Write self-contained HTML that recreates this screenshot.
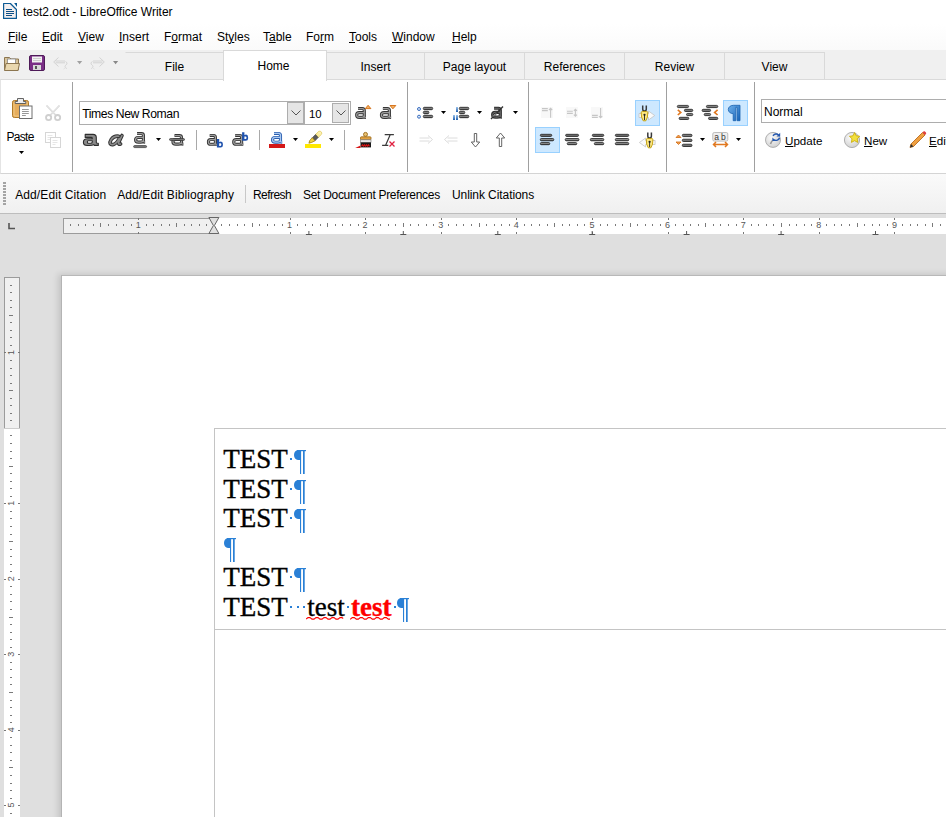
<!DOCTYPE html>
<html><head><meta charset="utf-8">
<style>
*{margin:0;padding:0;box-sizing:border-box}
html,body{width:946px;height:817px;overflow:hidden}
body{position:relative;background:#dfdfdf;font-family:"Liberation Sans",sans-serif;font-size:12px;color:#000}
.a{position:absolute}
.t{position:absolute;font-size:12px;line-height:14px;white-space:nowrap}
u{text-decoration:underline;text-underline-offset:0.6px;text-decoration-thickness:1px}
#title{left:0;top:0;width:946px;height:24px;background:#fff}
#menu{left:0;top:24px;width:946px;height:26px;background:linear-gradient(#fff,#fafafa)}
#tabs{left:0;top:50px;width:946px;height:30px;background:#f0f0f0;border-bottom:1px solid #d9d9d9}
.tab{position:absolute;top:2px;height:28px;border:1px solid #d9d9d9;border-bottom:none;background:#f0f0f0;text-align:center;line-height:28.5px;font-size:12px}
#ribbon{left:0;top:79px;width:946px;height:95px;background:#fff;border-top:1px solid #dadada;border-bottom:1px solid #d4d4d4;border-left:1px solid #e4e4e4}
.sep{position:absolute;width:1px;background:#a0a0a0}
#cite{left:0;top:174px;width:946px;height:40px;background:linear-gradient(#fafafa,#f0f0f0);border-bottom:1px solid #bdbdbd}
.box{position:absolute;background:#fff;border:1px solid #adadad}
.ddb{position:absolute;background:#e5e5e5;border:1px solid #adadad}
.hl{position:absolute;background:#cde8ff;border:1px solid #99d1ff}
.doc{position:absolute;font-family:"Liberation Serif",serif;font-size:27px;line-height:29.35px;white-space:pre;-webkit-text-stroke:0.35px currentColor}
.pm{color:#2f86d6}
</style></head><body>
<div id="title" class="a">
  <svg class="a" style="left:0;top:0" width="22" height="22" viewBox="0 0 22 22">
    <path d="M3.6 3.5H10.4L16.4 9.5V18.4H3.6Z" fill="#f3efef" stroke="#0c5a94" stroke-width="1.2" stroke-linejoin="round"/>
    <path d="M14.1 2.9H17V6.9Z" fill="#0c5a94"/>
    <path d="M6 9.5h6M6 11.5h8M6 13.5h8M6 15.5h6" stroke="#0c4f86" stroke-width="1"/>
  </svg>
  <div class="t" style="left:23px;top:4.5px">test2.odt - LibreOffice Writer</div>
</div>
<div id="menu" class="a"><div class="t" style="left:8px;top:6px"><u>F</u>ile</div><div class="t" style="left:42px;top:6px"><u>E</u>dit</div><div class="t" style="left:78px;top:6px"><u>V</u>iew</div><div class="t" style="left:119px;top:6px"><u>I</u>nsert</div><div class="t" style="left:164px;top:6px">F<u>o</u>rmat</div><div class="t" style="left:217px;top:6px">St<u>y</u>les</div><div class="t" style="left:263px;top:6px">T<u>a</u>ble</div><div class="t" style="left:306px;top:6px">Fo<u>r</u>m</div><div class="t" style="left:349px;top:6px"><u>T</u>ools</div><div class="t" style="left:392px;top:6px"><u>W</u>indow</div><div class="t" style="left:452px;top:6px"><u>H</u>elp</div></div>
<div id="tabs" class="a"><div class="tab" style="left:125px;width:99px;border-left-color:#f0f0f0">File</div><div class="tab" style="left:223px;width:104px;top:0;height:31px;background:#fff;line-height:31.5px;z-index:2;padding-right:3px">Home</div><div class="tab" style="left:326px;width:99px">Insert</div><div class="tab" style="left:424px;width:101px">Page layout</div><div class="tab" style="left:524px;width:101px">References</div><div class="tab" style="left:624px;width:101px">Review</div><div class="tab" style="left:724px;width:101px">View</div></div>
<div id="ribbon" class="a"></div>
<div class="sep" style="left:72px;top:82px;height:90px"></div>
<div class="sep" style="left:407px;top:82px;height:90px"></div>
<div class="sep" style="left:528px;top:82px;height:90px"></div>
<div class="sep" style="left:666px;top:82px;height:90px"></div>
<div class="sep" style="left:754px;top:82px;height:90px"></div>
<div class="box" style="left:79px;top:101px;width:226px;height:24px"></div>
<div class="ddb" style="left:287px;top:102px;width:17px;height:22px"></div>
<div class="a" style="left:303px;top:102px;width:3px;height:22px;background:#adadad"></div>
<div class="box" style="left:305px;top:101px;width:46px;height:24px;border-left:none"></div>
<div class="ddb" style="left:332px;top:103px;width:17px;height:20px"></div>
<div class="t" style="left:82.2px;top:106.8px;font-size:12.2px;letter-spacing:-0.42px">Times New Roman</div>
<div class="t" style="left:309px;top:106.5px;font-size:11.4px">10</div>
<svg class="a" style="left:290.5px;top:110px" width="10" height="6" viewBox="0 0 10 6"><path d="M0.5 0.5L5 5L9.5 0.5" fill="none" stroke="#555" stroke-width="1"/></svg>
<svg class="a" style="left:335.5px;top:110px" width="10" height="6" viewBox="0 0 10 6"><path d="M0.5 0.5L5 5L9.5 0.5" fill="none" stroke="#555" stroke-width="1"/></svg>
<div class="box" style="left:761px;top:99px;width:200px;height:24px"></div>
<div class="t" style="left:764px;top:104.5px">Normal</div>
<div class="t" style="left:785px;top:133.5px;font-size:11.6px"><u>U</u>pdate</div>
<div class="t" style="left:864px;top:133.5px;font-size:11.6px"><u>N</u>ew</div>
<div class="t" style="left:929px;top:133.5px;font-size:11.6px"><u>E</u>dit</div>
<div class="t" style="left:6.5px;top:129.8px;letter-spacing:-0.7px">Paste</div>
<div class="hl" style="left:635px;top:100px;width:25px;height:26px"></div>
<div class="hl" style="left:723px;top:100px;width:25px;height:26px"></div>
<div class="hl" style="left:535px;top:127px;width:25px;height:26px"></div>
<svg class="a" style="left:0;top:0" width="946" height="240" viewBox="0 0 946 240">
<defs><linearGradient id="gbar" x1="0" y1="0" x2="0" y2="1"><stop offset="0" stop-color="#505050"/><stop offset="0.4" stop-color="#959595"/><stop offset="1" stop-color="#141414"/></linearGradient><linearGradient id="gblue" x1="0" y1="0" x2="0" y2="1"><stop offset="0" stop-color="#9cc3ec"/><stop offset="1" stop-color="#1f5fae"/></linearGradient><linearGradient id="gpil" x1="0" y1="0" x2="1" y2="1"><stop offset="0" stop-color="#6fb0ea"/><stop offset="1" stop-color="#1663b8"/></linearGradient><radialGradient id="gcirc" cx="0.4" cy="0.35" r="0.7"><stop offset="0" stop-color="#fafafa"/><stop offset="1" stop-color="#cfcfcf"/></radialGradient></defs>
<path d="M4.5 57.5h5l1.5 1.5h7.5v11h-14z" fill="#d9c49a" stroke="#8c7650"/>
<rect x="7.5" y="59" width="8" height="5" fill="#fff" stroke="#888" stroke-width="0.8"/>
<path d="M4.5 70.5l1.5-7h13.5l-1.5 7z" fill="#e9d7ae" stroke="#8c7650"/>
<rect x="29.5" y="55.5" width="15" height="15" rx="1.5" fill="#7a2e86" stroke="#4e1a58"/>
<rect x="32" y="56.5" width="10" height="6" fill="#f2f2f2"/><path d="M33 58.5h8M33 60.5h8" stroke="#bbb" stroke-width="0.7"/>
<rect x="33" y="65" width="8" height="5" fill="#d8d8d8"/><rect x="35" y="66" width="2" height="3" fill="#555"/>
<path d="M58.5 57.5l-4.8 4.5 4.8 4.5M55.5 61h9.5M55.5 62.8h9.5M65.5 61.5c2 0.8 1.8 2.5 0.5 3.5s-1.5 2.6 0.8 3.5M64.5 68.5l-0.8 0.5" fill="none" stroke="#cfcfcf" stroke-width="0.9"/>
<path d="M77 61h5.2l-2.6 3.2z" fill="#a0a0a0"/>
<path d="M99.5 57.5l4.8 4.5-4.8 4.5M102.5 61h-9.5M102.5 62.8h-9.5M92.5 61.5c-2 0.8-1.8 2.5-0.5 3.5s1.5 2.6-0.8 3.5M93.5 68.5l0.8 0.5" fill="none" stroke="#cfcfcf" stroke-width="0.9"/>
<path d="M113 61h5.2l-2.6 3.2z" fill="#888"/>
<rect x="12.5" y="100.5" width="16" height="17" rx="1.8" fill="#e6ad5c" stroke="#b07a28"/>
<rect x="14" y="102" width="13" height="14" rx="1" fill="none" stroke="#f3cf8e" stroke-width="0.8"/>
<path d="M17.5 101.5v-3h6v3h2.3v2h-10.6v-2z" fill="#ececec" stroke="#555" stroke-width="0.9"/>
<rect x="19.5" y="106" width="12.5" height="12.5" fill="#fff" stroke="#6e6e6e"/>
<path d="M22 109.5h6.8M22 111.5h6.8M22 113.5h6.8M22 115.5h3.8" stroke="#8c8c8c" stroke-width="0.9"/>
<path d="M19 151h5l-2.5 3z" fill="#000"/>
<path d="M46.5 105.5L56 115.5M59.5 105.5L50 115.5" stroke="#d4d4d4" stroke-width="1.7"/><path d="M46.8 106L55.5 115M59.2 106L50.5 115" stroke="#f4f4f4" stroke-width="0.6"/>
<circle cx="48.6" cy="117.6" r="2.6" fill="none" stroke="#cfcfcf" stroke-width="1.8"/><circle cx="57.6" cy="117.6" r="2.6" fill="none" stroke="#cfcfcf" stroke-width="1.8"/>
<rect x="45.5" y="132.5" width="10" height="10" fill="#fff" stroke="#d6d6d6"/>
<path d="M47.5 135.5h5M47.5 137.5h5M47.5 139.5h3" stroke="#e0e0e0" stroke-width="0.8"/>
<rect x="50.5" y="137.5" width="10" height="10" fill="#fff" stroke="#d6d6d6"/>
<path d="M52.5 140.5h5M52.5 142.5h5M52.5 144.5h3" stroke="#e0e0e0" stroke-width="0.8"/>
<path d="M85.2 134.4H93Q96.3 134.4 96.3 137.6V142.5Q96.3 143.3 98.3 143.3V145.4H94.3L93.7 144.6Q92.5 145.5 89.5 145.5H87.3Q83.4 145.5 83.4 142.2Q83.4 138.7 87.5 138.7H92.3V138.3Q92.3 137.4 91.2 137.4H85.2Z M88 140.7H92.3V142Q92.3 143.3 90.3 143.3H88.4Q87.4 143.3 87.4 142Q87.4 140.7 88 140.7Z" fill="#8a8a8a" fill-rule="evenodd" stroke="#2e2e2e" stroke-width="1.1" stroke-linejoin="round"/>
<path d="M118.8 136.2 Q114 135.5 111.2 139.5 Q109.6 142 110.2 143.6 Q111 145 113.5 144.4 Q116.5 143.6 119.3 138.5 M122 135.5 L118.6 142.6 Q118 144.6 120.6 144" fill="none" stroke="#333" stroke-width="3.6" stroke-linejoin="round" stroke-linecap="round"/>
<path d="M118.8 136.2 Q114 135.5 111.2 139.5 Q109.6 142 110.2 143.6 Q111 145 113.5 144.4 Q116.5 143.6 119.3 138.5 M122 135.5 L118.6 142.6 Q118 144.6 120.6 144" fill="none" stroke="#8c8c8c" stroke-width="1.6" stroke-linejoin="round" stroke-linecap="round"/>
<path d="M 137.05 133.54 H 141.47 Q 143.44 133.54 143.44 135.45 V 141.30 Q 143.44 142.16 145.11 142.16 M 143.44 137.47 H 138.23 Q 135.57 137.47 135.57 139.81 Q 135.57 142.16 138.23 142.16 H 140.49 Q 143.44 142.16 143.44 140.05" fill="none" stroke="#363636" stroke-width="3.1" stroke-linejoin="round"/><path d="M 137.05 133.54 H 141.47 Q 143.44 133.54 143.44 135.45 V 141.30 Q 143.44 142.16 145.11 142.16 M 143.44 137.47 H 138.23 Q 135.57 137.47 135.57 139.81 Q 135.57 142.16 138.23 142.16 H 140.49 Q 143.44 142.16 143.44 140.05" fill="none" stroke="#9c9c9c" stroke-width="1.25" stroke-linejoin="round"/>
<rect x="133.6" y="145.6" width="13" height="2" rx="1" fill="#777" stroke="#333" stroke-width="0.7"/>
<path d="M156 138h5l-2.5 3z" fill="#000"/>
<path d="M 174.53 135.54 H 179.36 Q 181.51 135.54 181.51 137.45 V 143.30 Q 181.51 144.16 183.34 144.16 M 181.51 139.47 H 175.81 Q 172.91 139.47 172.91 141.81 Q 172.91 144.16 175.81 144.16 H 178.29 Q 181.51 144.16 181.51 142.05" fill="none" stroke="#363636" stroke-width="3.1" stroke-linejoin="round"/><path d="M 174.53 135.54 H 179.36 Q 181.51 135.54 181.51 137.45 V 143.30 Q 181.51 144.16 183.34 144.16 M 181.51 139.47 H 175.81 Q 172.91 139.47 172.91 141.81 Q 172.91 144.16 175.81 144.16 H 178.29 Q 181.51 144.16 181.51 142.05" fill="none" stroke="#9c9c9c" stroke-width="1.25" stroke-linejoin="round"/>
<rect x="169.5" y="138.5" width="15" height="2" rx="1" fill="#777" stroke="#333" stroke-width="0.7"/>
<rect x="196" y="130" width="1" height="20" fill="#a9a9a9"/>
<path d="M 209.72 135.47 H 213.66 Q 215.41 135.47 215.41 137.44 V 143.44 Q 215.41 144.32 216.90 144.32 M 215.41 139.51 H 210.78 Q 208.41 139.51 208.41 141.92 Q 208.41 144.32 210.78 144.32 H 212.79 Q 215.41 144.32 215.41 142.16" fill="none" stroke="#363636" stroke-width="3.1" stroke-linejoin="round"/><path d="M 209.72 135.47 H 213.66 Q 215.41 135.47 215.41 137.44 V 143.44 Q 215.41 144.32 216.90 144.32 M 215.41 139.51 H 210.78 Q 208.41 139.51 208.41 141.92 Q 208.41 144.32 210.78 144.32 H 212.79 Q 215.41 144.32 215.41 142.16" fill="none" stroke="#9c9c9c" stroke-width="1.25" stroke-linejoin="round"/>
<path d="M216.9 139.0h2.3v2.9q0.8-0.5 1.7-0.5q2 0 2 2.6v1.2q0 2.4-2.3 2.4h-3.7z M219.20000000000002 143.3v2.6h1.2q0.9 0 0.9-1.1v-0.5q0-1-0.9-1z" fill="#1f52ad" fill-rule="evenodd"/>
<path d="M 235.17 135.47 H 239.64 Q 241.62 135.47 241.62 137.44 V 143.44 Q 241.62 144.32 243.31 144.32 M 241.62 139.51 H 236.36 Q 233.69 139.51 233.69 141.92 Q 233.69 144.32 236.36 144.32 H 238.65 Q 241.62 144.32 241.62 142.16" fill="none" stroke="#363636" stroke-width="3.1" stroke-linejoin="round"/><path d="M 235.17 135.47 H 239.64 Q 241.62 135.47 241.62 137.44 V 143.44 Q 241.62 144.32 243.31 144.32 M 241.62 139.51 H 236.36 Q 233.69 139.51 233.69 141.92 Q 233.69 144.32 236.36 144.32 H 238.65 Q 241.62 144.32 241.62 142.16" fill="none" stroke="#9c9c9c" stroke-width="1.25" stroke-linejoin="round"/>
<path d="M242.1 132.2h2.3v2.9q0.8-0.5 1.7-0.5q2 0 2 2.6v1.2q0 2.4-2.3 2.4h-3.7z M244.4 136.5v2.6h1.2q0.9 0 0.9-1.1v-0.5q0-1-0.9-1z" fill="#1f52ad" fill-rule="evenodd"/>
<rect x="259" y="130" width="1" height="20" fill="#a9a9a9"/>
<path d="M 274.00 133.46 H 278.50 Q 280.50 133.46 280.50 135.41 V 141.36 Q 280.50 142.24 282.20 142.24 M 280.50 137.46 H 275.20 Q 272.50 137.46 272.50 139.85 Q 272.50 142.24 275.20 142.24 H 277.50 Q 280.50 142.24 280.50 140.09" fill="none" stroke="#2d5fb0" stroke-width="3.1" stroke-linejoin="round"/><path d="M 274.00 133.46 H 278.50 Q 280.50 133.46 280.50 135.41 V 141.36 Q 280.50 142.24 282.20 142.24 M 280.50 137.46 H 275.20 Q 272.50 137.46 272.50 139.85 Q 272.50 142.24 275.20 142.24 H 277.50 Q 280.50 142.24 280.50 140.09" fill="none" stroke="#a8c8f0" stroke-width="1.25" stroke-linejoin="round"/>
<rect x="269" y="144" width="16" height="4" fill="#d41818"/>
<path d="M293 138h5l-2.5 3z" fill="#000"/>
<defs><linearGradient id="ghl" x1="0" y1="1" x2="1" y2="0"><stop offset="0" stop-color="#f6e27a"/><stop offset="1" stop-color="#fff6c8"/></linearGradient></defs>
<path d="M315.5 134.5l3.2-3.2q1.5-0.6 2.6 0.6 0.9 1.2 0.2 2.4l-3.3 3.3z" fill="url(#ghl)" stroke="#d8c040" stroke-width="0.6"/>
<path d="M312.3 137.7l3.2-3.2 2.7 3.1-3.2 3.2z" fill="#5a5a5a" stroke="#333" stroke-width="0.5"/>
<path d="M312.3 137.7l2.7 3.1-3.3 1.6-2.8 0.8 0.9-2.8z" fill="#f0d040" stroke="#9a7a10" stroke-width="0.8"/>
<rect x="305" y="144" width="16" height="4" fill="#ffe800"/>
<path d="M329 138h5l-2.5 3z" fill="#000"/>
<rect x="344" y="130" width="1" height="20" fill="#a9a9a9"/>
<path d="M 358.07 108.57 H 362.39 Q 364.30 108.57 364.30 110.54 V 116.54 Q 364.30 117.42 365.93 117.42 M 364.30 112.61 H 359.22 Q 356.64 112.61 356.64 115.02 Q 356.64 117.42 359.22 117.42 H 361.43 Q 364.30 117.42 364.30 115.26" fill="none" stroke="#363636" stroke-width="3.1" stroke-linejoin="round"/><path d="M 358.07 108.57 H 362.39 Q 364.30 108.57 364.30 110.54 V 116.54 Q 364.30 117.42 365.93 117.42 M 364.30 112.61 H 359.22 Q 356.64 112.61 356.64 115.02 Q 356.64 117.42 359.22 117.42 H 361.43 Q 364.30 117.42 364.30 115.26" fill="none" stroke="#9c9c9c" stroke-width="1.25" stroke-linejoin="round"/>
<path d="M365.3 108.6l2.8-3.3 2.8 3.3z" fill="#f4b060" stroke="#d06a10" stroke-width="0.9"/>
<path d="M 382.90 108.57 H 387.40 Q 389.40 108.57 389.40 110.54 V 116.54 Q 389.40 117.42 391.10 117.42 M 389.40 112.61 H 384.10 Q 381.40 112.61 381.40 115.02 Q 381.40 117.42 384.10 117.42 H 386.40 Q 389.40 117.42 389.40 115.26" fill="none" stroke="#363636" stroke-width="3.1" stroke-linejoin="round"/><path d="M 382.90 108.57 H 387.40 Q 389.40 108.57 389.40 110.54 V 116.54 Q 389.40 117.42 391.10 117.42 M 389.40 112.61 H 384.10 Q 381.40 112.61 381.40 115.02 Q 381.40 117.42 384.10 117.42 H 386.40 Q 389.40 117.42 389.40 115.26" fill="none" stroke="#9c9c9c" stroke-width="1.25" stroke-linejoin="round"/>
<path d="M390 105.5h5.8l-2.9 3.3z" fill="#f4b060" stroke="#d06a10" stroke-width="0.9"/>
<circle cx="365.5" cy="134.4" r="2" fill="#e8c070" stroke="#9a6a18" stroke-width="0.9"/>
<rect x="360.5" y="136.8" width="10.5" height="3" rx="0.8" fill="#e0a040" stroke="#9a6a18" stroke-width="0.8"/>
<rect x="360.5" y="139.8" width="10.5" height="2.6" fill="#e8e8e8" stroke="#777" stroke-width="0.6"/>
<rect x="360.5" y="142.4" width="10.5" height="5" fill="#1a1a1a"/>
<path d="M355.2 148L360.5 145.6V148Z" fill="#d81818"/><path d="M361.5 146.2l1-1.5 1 1.5 1-1.5 1 1.5 1-1.5 1 1.5 1-1.5 1 1.5" stroke="#d01010" stroke-width="1.1" fill="none"/>
<path d="M384.7 134.6H393.9M382.1 145.3H388.3M390.3 134.6L385.6 145.3" fill="none" stroke="#3a3a3a" stroke-width="1.2"/>
<path d="M389.5 141.5l5 5M394.5 141.5l-5 5" stroke="#e02040" stroke-width="1.3"/>
<circle cx="419" cy="109" r="1.5" fill="#dfe9f7" stroke="#3b6fc0" stroke-width="1"/><circle cx="419" cy="116.7" r="1.5" fill="#dfe9f7" stroke="#3b6fc0" stroke-width="1"/>
<rect x="423.3" y="107.3" width="9.40" height="2.4" rx="1.1" fill="url(#gbar)" stroke="#262626" stroke-width="0.8"/><rect x="423.3" y="111.3" width="5.60" height="2.4" rx="1.1" fill="url(#gbar)" stroke="#262626" stroke-width="0.8"/><rect x="423.3" y="115.3" width="9.40" height="2.4" rx="1.1" fill="url(#gbar)" stroke="#262626" stroke-width="0.8"/>
<path d="M441 111h5l-2.5 3z" fill="#000"/>
<rect x="456" y="107" width="2" height="5" fill="url(#gblue)"/><rect x="453" y="115" width="2" height="5" fill="url(#gblue)"/><rect x="456" y="115" width="2" height="5" fill="url(#gblue)"/>
<rect x="459.3" y="107.3" width="9.50" height="2.4" rx="1.1" fill="url(#gbar)" stroke="#262626" stroke-width="0.8"/><rect x="459.3" y="111.3" width="5.50" height="2.4" rx="1.1" fill="url(#gbar)" stroke="#262626" stroke-width="0.8"/><rect x="459.3" y="115.3" width="9.50" height="2.4" rx="1.1" fill="url(#gbar)" stroke="#262626" stroke-width="0.8"/>
<path d="M477 111h5l-2.5 3z" fill="#000"/>
<path d="M 494.07 108.27 H 498.39 Q 500.30 108.27 500.30 110.24 V 116.24 Q 500.30 117.12 501.93 117.12 M 500.30 112.31 H 495.22 Q 492.64 112.31 492.64 114.72 Q 492.64 117.12 495.22 117.12 H 497.43 Q 500.30 117.12 500.30 114.96" fill="none" stroke="#303030" stroke-width="3.2" stroke-linejoin="round"/><path d="M 494.07 108.27 H 498.39 Q 500.30 108.27 500.30 110.24 V 116.24 Q 500.30 117.12 501.93 117.12 M 500.30 112.31 H 495.22 Q 492.64 112.31 492.64 114.72 Q 492.64 117.12 495.22 117.12 H 497.43 Q 500.30 117.12 500.30 114.96" fill="none" stroke="#6a6a6a" stroke-width="1.0" stroke-linejoin="round"/>
<path d="M491 119l12-12.5" stroke="#303030" stroke-width="1.3"/><path d="M493 116.5l3-3" stroke="#ddd" stroke-width="0.8"/>
<path d="M513 111h5l-2.5 3z" fill="#000"/>
<path d="M419.5 138h10M419.5 141h10M428 135.5l4.5 4-4.5 4" fill="none" stroke="#dcdcdc" stroke-width="1"/>
<path d="M457.5 138h-10M457.5 141h-10M449 135.5l-4.5 4 4.5 4" fill="none" stroke="#dcdcdc" stroke-width="1"/>
<path d="M474.3 133.5h2.4v8.5h3l-4.2 5-4.2-5h3z" fill="#fff" stroke="#555" stroke-width="0.9"/>
<path d="M499.3 146.5h2.4v-8.5h3l-4.2-5-4.2 5h3z" fill="#fff" stroke="#555" stroke-width="0.9"/>
<rect x="541" y="107" width="12" height="11" fill="#f8f8f8"/><path d="M542 108.6h5.8M542 110.6h5.8M550.6 108.5v9.3M549 110l1.6-1.6 1.6 1.6" fill="none" stroke="#c6c6c6" stroke-width="1.1"/>
<rect x="566" y="107" width="12" height="11" fill="#f8f8f8"/><path d="M567 111.2h5.8M567 113.4h5.8M575.4 109.4v6.6M573.9 110.8l1.5-1.5 1.5 1.5M573.9 114.6l1.5 1.5 1.5-1.5" fill="none" stroke="#c6c6c6" stroke-width="1.1"/>
<rect x="591" y="107" width="12" height="11" fill="#f8f8f8"/><path d="M592 115.4h5.8M592 117.4h5.8M600.6 108v9.5M599 116.1l1.6 1.6 1.6-1.6" fill="none" stroke="#c6c6c6" stroke-width="1.1"/>
<rect x="540.3" y="134.3" width="11.50" height="2.1" rx="1.1" fill="url(#gbar)" stroke="#262626" stroke-width="0.8"/><rect x="540.3" y="138.5" width="13.50" height="2.3" rx="1.1" fill="url(#gbar)" stroke="#262626" stroke-width="0.8"/><rect x="540.3" y="142.6" width="9.50" height="2.1" rx="1.1" fill="url(#gbar)" stroke="#262626" stroke-width="0.8"/>
<rect x="565.6" y="134.3" width="13.00" height="2.1" rx="1.1" fill="url(#gbar)" stroke="#262626" stroke-width="0.8"/><rect x="565.2" y="138.5" width="13.80" height="2.3" rx="1.1" fill="url(#gbar)" stroke="#262626" stroke-width="0.8"/><rect x="567.2" y="142.6" width="9.60" height="2.1" rx="1.1" fill="url(#gbar)" stroke="#262626" stroke-width="0.8"/>
<rect x="592.3" y="134.3" width="11.50" height="2.1" rx="1.1" fill="url(#gbar)" stroke="#262626" stroke-width="0.8"/><rect x="590.3" y="138.5" width="13.50" height="2.3" rx="1.1" fill="url(#gbar)" stroke="#262626" stroke-width="0.8"/><rect x="594.3" y="142.6" width="9.50" height="2.1" rx="1.1" fill="url(#gbar)" stroke="#262626" stroke-width="0.8"/>
<rect x="615.3" y="134.3" width="13.50" height="2.1" rx="1.1" fill="url(#gbar)" stroke="#262626" stroke-width="0.8"/><rect x="615.3" y="138.5" width="13.50" height="2.3" rx="1.1" fill="url(#gbar)" stroke="#262626" stroke-width="0.8"/><rect x="615.3" y="142.6" width="13.50" height="2.1" rx="1.1" fill="url(#gbar)" stroke="#262626" stroke-width="0.8"/>
<path d="M639.0 113.5h9.5v-2.5l6.2 4.5-6.2 4.5v-2.5h-9.5z" fill="#fafafa" stroke="#c4c4c4" stroke-width="0.8"/><path d="M642.7 105.5v3.6q0 2 1.8 2q1.8 0 1.8-2v-3.6" fill="none" stroke="#3a3a3a" stroke-width="1.5"/><path d="M641.2 112.7q0-1.2 1.2-1.2h4.2q1.2 0 1.2 1.2l-0.4 4.5-1.6 3.6h-2.6l-1.6-3.6z" fill="#fbe680" stroke="#c09a00" stroke-width="0.9"/><path d="M644.5 114.5v5.5" stroke="#222" stroke-width="0.9"/><circle cx="644.5" cy="114.8" r="1.1" fill="#222"/>
<path d="M655.1 140.5h-9.5v-2.5l-6.2 4.5 6.2 4.5v-2.5h9.5z" fill="#fafafa" stroke="#c4c4c4" stroke-width="0.8"/><path d="M647.8000000000001 132.5v3.6q0 2 1.8 2q1.8 0 1.8-2v-3.6" fill="none" stroke="#3a3a3a" stroke-width="1.5"/><path d="M646.3000000000001 139.7q0-1.2 1.2-1.2h4.2q1.2 0 1.2 1.2l-0.4 4.5-1.6 3.6h-2.6l-1.6-3.6z" fill="#fbe680" stroke="#c09a00" stroke-width="0.9"/><path d="M649.6 141.5v5.5" stroke="#222" stroke-width="0.9"/><circle cx="649.6" cy="141.8" r="1.1" fill="#222"/>
<rect x="677.3" y="105.4" width="11.30" height="2.2" rx="1.1" fill="url(#gbar)" stroke="#262626" stroke-width="0.8"/><rect x="684.4" y="109.3" width="8.40" height="2.2" rx="1.1" fill="url(#gbar)" stroke="#262626" stroke-width="0.8"/><rect x="686.5" y="113.4" width="6.30" height="2.2" rx="1.1" fill="url(#gbar)" stroke="#262626" stroke-width="0.8"/><rect x="679.1" y="117.3" width="9.70" height="2.2" rx="1.1" fill="url(#gbar)" stroke="#262626" stroke-width="0.8"/>
<path d="M677.8 109.8l3 2.6-3 2.6" fill="none" stroke="#e07820" stroke-width="1.6"/>
<rect x="706.4" y="105.4" width="11.40" height="2.2" rx="1.1" fill="url(#gbar)" stroke="#262626" stroke-width="0.8"/><rect x="702.1" y="109.3" width="8.50" height="2.2" rx="1.1" fill="url(#gbar)" stroke="#262626" stroke-width="0.8"/><rect x="704.2" y="113.4" width="6.40" height="2.2" rx="1.1" fill="url(#gbar)" stroke="#262626" stroke-width="0.8"/><rect x="708.5" y="117.3" width="9.30" height="2.2" rx="1.1" fill="url(#gbar)" stroke="#262626" stroke-width="0.8"/>
<path d="M717.6 109.8l-3 2.6 3 2.6" fill="none" stroke="#e07820" stroke-width="1.6"/>
<path d="M740 105.3H733.5C730.3 105.3 728.3 107.3 728.3 109.5S730.3 113.7 733.2 113.7V120.7H735.8V107.3H737.1V120.7H740Z" fill="url(#gpil)" stroke="#1a62b0" stroke-width="0.8"/>
<path d="M676 137.5l2.5-2.5 2.5 2.5z" fill="#f0a050" stroke="#d06a10" stroke-width="0.8"/><path d="M676 142l2.5 2.5 2.5-2.5z" fill="#f0a050" stroke="#d06a10" stroke-width="0.8"/>
<rect x="682.3" y="134.3" width="9.70" height="2.3" rx="1.1" fill="url(#gbar)" stroke="#262626" stroke-width="0.8"/><rect x="682.3" y="139.2" width="9.70" height="2.3" rx="1.1" fill="url(#gbar)" stroke="#262626" stroke-width="0.8"/><rect x="682.3" y="144.2" width="9.70" height="2.3" rx="1.1" fill="url(#gbar)" stroke="#262626" stroke-width="0.8"/>
<path d="M700 138h5l-2.5 3z" fill="#000"/>
<rect x="712.8" y="132.5" width="15" height="8.6" rx="1.5" fill="#efefef" stroke="#b5b5b5" stroke-width="0.9"/>
<text x="714.2" y="140" font-family="Liberation Sans" font-size="8.5" fill="#333">a</text><text x="721" y="140" font-family="Liberation Sans" font-size="8.5" fill="#333">b</text>
<path d="M713.5 144.5h14M716 142l-2.5 2.5 2.5 2.5M725 142l2.5 2.5-2.5 2.5" fill="none" stroke="#e07820" stroke-width="1.5"/>
<path d="M736 138h5l-2.5 3z" fill="#000"/>
<circle cx="773" cy="139.9" r="7.5" fill="url(#gcirc)" stroke="#a8a8a8" stroke-width="0.9"/>
<path d="M770.5 144c0.5-2 1.5-3.5 3.5-4.2" fill="none" stroke="#9a9a9a" stroke-width="1.6"/>
<path d="M773 135.8c1.2-2 4-2.4 5.6-0.8M779.6 137.8c-0.6 2.2-3.4 3.2-5.6 2.2" fill="none" stroke="#2458b0" stroke-width="1.4"/>
<path d="M780.2 132.8v3.6h-3.6z" fill="#2458b0"/><path d="M772.4 137.5v3.6h3.6z" fill="#2458b0"/>
<circle cx="852" cy="140" r="7.6" fill="url(#gcirc)" stroke="#a8a8a8" stroke-width="0.9"/>
<path d="M854.6 132.5l1.6 3.3 3.6 0.5-2.6 2.5 0.6 3.6-3.2-1.7-3.2 1.7 0.6-3.6-2.6-2.5 3.6-0.5z" fill="#f2e040" stroke="#c8a800" stroke-width="0.8"/>
<path d="M910 147.5l1-3.5 11.5-11.5 2.5 2.5-11.5 11.5z" fill="#f0a040" stroke="#b06010" stroke-width="0.8"/>
<path d="M922.5 132.5l2.5 2.5 1-1c0.5-0.7 0-1.6-0.8-2.2-0.7-0.6-1.4-0.6-1.9-0.1z" fill="#e04040"/>
<path d="M910 147.5l1-3.5 2.5 2.5z" fill="#333"/>
</svg>
<div id="cite" class="a"></div>
<div class="t" style="left:15.2px;top:187.5px;letter-spacing:0.1px">Add/Edit Citation</div><div class="t" style="left:117.2px;top:187.5px;letter-spacing:0.1px">Add/Edit Bibliography</div><div class="a" style="left:245px;top:185px;width:1px;height:18px;background:#c8c8c8"></div><div class="t" style="left:253px;top:187.5px;letter-spacing:-0.55px">Refresh</div><div class="t" style="left:303px;top:187.5px;letter-spacing:-0.3px">Set Document Preferences</div><div class="t" style="left:452px;top:187.5px;letter-spacing:-0.08px">Unlink Citations</div><div class="a" style="left:3px;top:182px;width:3px;height:2px;background:#a4a4a4"></div><div class="a" style="left:3px;top:185px;width:3px;height:2px;background:#a4a4a4"></div><div class="a" style="left:3px;top:188px;width:3px;height:2px;background:#a4a4a4"></div><div class="a" style="left:3px;top:191px;width:3px;height:2px;background:#a4a4a4"></div><div class="a" style="left:3px;top:194px;width:3px;height:2px;background:#a4a4a4"></div><div class="a" style="left:3px;top:197px;width:3px;height:2px;background:#a4a4a4"></div><div class="a" style="left:3px;top:200px;width:3px;height:2px;background:#a4a4a4"></div><div class="a" style="left:3px;top:203px;width:3px;height:2px;background:#a4a4a4"></div>
<svg class="a" style="left:0;top:214px" width="946" height="24"><path d="M9 9v5.5h6" fill="none" stroke="#555" stroke-width="1.6"/><rect x="63.5" y="4.5" width="151" height="15" fill="#f0f0f0" stroke="#9b9b9b"/><rect x="214" y="4" width="732" height="16" fill="#fff"/><rect x="70" y="10" width="1" height="2" fill="#7a7a7a"/><rect x="78" y="10" width="1" height="2" fill="#7a7a7a"/><rect x="85" y="10" width="1" height="2" fill="#7a7a7a"/><rect x="93" y="10" width="1" height="2" fill="#7a7a7a"/><rect x="100" y="9" width="1" height="4" fill="#7a7a7a"/><rect x="108" y="10" width="1" height="2" fill="#7a7a7a"/><rect x="116" y="10" width="1" height="2" fill="#7a7a7a"/><rect x="123" y="10" width="1" height="2" fill="#7a7a7a"/><rect x="131" y="10" width="1" height="2" fill="#7a7a7a"/><text x="138.3" y="14" font-size="9" text-anchor="middle" fill="#555" font-family="Liberation Sans">1</text><rect x="138" y="4" width="1" height="2" fill="#777"/><rect x="138" y="18" width="1" height="2" fill="#777"/><rect x="146" y="10" width="1" height="2" fill="#7a7a7a"/><rect x="153" y="10" width="1" height="2" fill="#7a7a7a"/><rect x="161" y="10" width="1" height="2" fill="#7a7a7a"/><rect x="169" y="10" width="1" height="2" fill="#7a7a7a"/><rect x="176" y="9" width="1" height="4" fill="#7a7a7a"/><rect x="184" y="10" width="1" height="2" fill="#7a7a7a"/><rect x="191" y="10" width="1" height="2" fill="#7a7a7a"/><rect x="199" y="10" width="1" height="2" fill="#7a7a7a"/><rect x="206" y="10" width="1" height="2" fill="#7a7a7a"/><rect x="221" y="10" width="1" height="2" fill="#7a7a7a"/><rect x="229" y="10" width="1" height="2" fill="#7a7a7a"/><rect x="237" y="10" width="1" height="2" fill="#7a7a7a"/><rect x="244" y="10" width="1" height="2" fill="#7a7a7a"/><rect x="252" y="9" width="1" height="4" fill="#7a7a7a"/><rect x="259" y="10" width="1" height="2" fill="#7a7a7a"/><rect x="267" y="10" width="1" height="2" fill="#7a7a7a"/><rect x="274" y="10" width="1" height="2" fill="#7a7a7a"/><rect x="282" y="10" width="1" height="2" fill="#7a7a7a"/><text x="289.5" y="14" font-size="9" text-anchor="middle" fill="#555" font-family="Liberation Sans">1</text><rect x="290" y="4" width="1" height="2" fill="#777"/><rect x="290" y="18" width="1" height="2" fill="#777"/><rect x="297" y="10" width="1" height="2" fill="#7a7a7a"/><rect x="305" y="10" width="1" height="2" fill="#7a7a7a"/><rect x="312" y="10" width="1" height="2" fill="#7a7a7a"/><rect x="320" y="10" width="1" height="2" fill="#7a7a7a"/><rect x="327" y="9" width="1" height="4" fill="#7a7a7a"/><rect x="335" y="10" width="1" height="2" fill="#7a7a7a"/><rect x="342" y="10" width="1" height="2" fill="#7a7a7a"/><rect x="350" y="10" width="1" height="2" fill="#7a7a7a"/><rect x="358" y="10" width="1" height="2" fill="#7a7a7a"/><text x="365.1" y="14" font-size="9" text-anchor="middle" fill="#555" font-family="Liberation Sans">2</text><rect x="365" y="4" width="1" height="2" fill="#777"/><rect x="365" y="18" width="1" height="2" fill="#777"/><rect x="373" y="10" width="1" height="2" fill="#7a7a7a"/><rect x="380" y="10" width="1" height="2" fill="#7a7a7a"/><rect x="388" y="10" width="1" height="2" fill="#7a7a7a"/><rect x="395" y="10" width="1" height="2" fill="#7a7a7a"/><rect x="403" y="9" width="1" height="4" fill="#7a7a7a"/><rect x="410" y="10" width="1" height="2" fill="#7a7a7a"/><rect x="418" y="10" width="1" height="2" fill="#7a7a7a"/><rect x="426" y="10" width="1" height="2" fill="#7a7a7a"/><rect x="433" y="10" width="1" height="2" fill="#7a7a7a"/><text x="440.7" y="14" font-size="9" text-anchor="middle" fill="#555" font-family="Liberation Sans">3</text><rect x="441" y="4" width="1" height="2" fill="#777"/><rect x="441" y="18" width="1" height="2" fill="#777"/><rect x="448" y="10" width="1" height="2" fill="#7a7a7a"/><rect x="456" y="10" width="1" height="2" fill="#7a7a7a"/><rect x="463" y="10" width="1" height="2" fill="#7a7a7a"/><rect x="471" y="10" width="1" height="2" fill="#7a7a7a"/><rect x="479" y="9" width="1" height="4" fill="#7a7a7a"/><rect x="486" y="10" width="1" height="2" fill="#7a7a7a"/><rect x="494" y="10" width="1" height="2" fill="#7a7a7a"/><rect x="501" y="10" width="1" height="2" fill="#7a7a7a"/><rect x="509" y="10" width="1" height="2" fill="#7a7a7a"/><text x="516.3" y="14" font-size="9" text-anchor="middle" fill="#555" font-family="Liberation Sans">4</text><rect x="516" y="4" width="1" height="2" fill="#777"/><rect x="516" y="18" width="1" height="2" fill="#777"/><rect x="524" y="10" width="1" height="2" fill="#7a7a7a"/><rect x="531" y="10" width="1" height="2" fill="#7a7a7a"/><rect x="539" y="10" width="1" height="2" fill="#7a7a7a"/><rect x="547" y="10" width="1" height="2" fill="#7a7a7a"/><rect x="554" y="9" width="1" height="4" fill="#7a7a7a"/><rect x="562" y="10" width="1" height="2" fill="#7a7a7a"/><rect x="569" y="10" width="1" height="2" fill="#7a7a7a"/><rect x="577" y="10" width="1" height="2" fill="#7a7a7a"/><rect x="584" y="10" width="1" height="2" fill="#7a7a7a"/><text x="592.0" y="14" font-size="9" text-anchor="middle" fill="#555" font-family="Liberation Sans">5</text><rect x="592" y="4" width="1" height="2" fill="#777"/><rect x="592" y="18" width="1" height="2" fill="#777"/><rect x="600" y="10" width="1" height="2" fill="#7a7a7a"/><rect x="607" y="10" width="1" height="2" fill="#7a7a7a"/><rect x="615" y="10" width="1" height="2" fill="#7a7a7a"/><rect x="622" y="10" width="1" height="2" fill="#7a7a7a"/><rect x="630" y="9" width="1" height="4" fill="#7a7a7a"/><rect x="637" y="10" width="1" height="2" fill="#7a7a7a"/><rect x="645" y="10" width="1" height="2" fill="#7a7a7a"/><rect x="652" y="10" width="1" height="2" fill="#7a7a7a"/><rect x="660" y="10" width="1" height="2" fill="#7a7a7a"/><text x="667.6" y="14" font-size="9" text-anchor="middle" fill="#555" font-family="Liberation Sans">6</text><rect x="668" y="4" width="1" height="2" fill="#777"/><rect x="668" y="18" width="1" height="2" fill="#777"/><rect x="675" y="10" width="1" height="2" fill="#7a7a7a"/><rect x="683" y="10" width="1" height="2" fill="#7a7a7a"/><rect x="690" y="10" width="1" height="2" fill="#7a7a7a"/><rect x="698" y="10" width="1" height="2" fill="#7a7a7a"/><rect x="705" y="9" width="1" height="4" fill="#7a7a7a"/><rect x="713" y="10" width="1" height="2" fill="#7a7a7a"/><rect x="720" y="10" width="1" height="2" fill="#7a7a7a"/><rect x="728" y="10" width="1" height="2" fill="#7a7a7a"/><rect x="736" y="10" width="1" height="2" fill="#7a7a7a"/><text x="743.2" y="14" font-size="9" text-anchor="middle" fill="#555" font-family="Liberation Sans">7</text><rect x="743" y="4" width="1" height="2" fill="#777"/><rect x="743" y="18" width="1" height="2" fill="#777"/><rect x="751" y="10" width="1" height="2" fill="#7a7a7a"/><rect x="758" y="10" width="1" height="2" fill="#7a7a7a"/><rect x="766" y="10" width="1" height="2" fill="#7a7a7a"/><rect x="773" y="10" width="1" height="2" fill="#7a7a7a"/><rect x="781" y="9" width="1" height="4" fill="#7a7a7a"/><rect x="789" y="10" width="1" height="2" fill="#7a7a7a"/><rect x="796" y="10" width="1" height="2" fill="#7a7a7a"/><rect x="804" y="10" width="1" height="2" fill="#7a7a7a"/><rect x="811" y="10" width="1" height="2" fill="#7a7a7a"/><text x="818.8" y="14" font-size="9" text-anchor="middle" fill="#555" font-family="Liberation Sans">8</text><rect x="819" y="4" width="1" height="2" fill="#777"/><rect x="819" y="18" width="1" height="2" fill="#777"/><rect x="826" y="10" width="1" height="2" fill="#7a7a7a"/><rect x="834" y="10" width="1" height="2" fill="#7a7a7a"/><rect x="841" y="10" width="1" height="2" fill="#7a7a7a"/><rect x="849" y="10" width="1" height="2" fill="#7a7a7a"/><rect x="857" y="9" width="1" height="4" fill="#7a7a7a"/><rect x="864" y="10" width="1" height="2" fill="#7a7a7a"/><rect x="872" y="10" width="1" height="2" fill="#7a7a7a"/><rect x="879" y="10" width="1" height="2" fill="#7a7a7a"/><rect x="887" y="10" width="1" height="2" fill="#7a7a7a"/><text x="894.4" y="14" font-size="9" text-anchor="middle" fill="#555" font-family="Liberation Sans">9</text><rect x="894" y="4" width="1" height="2" fill="#777"/><rect x="894" y="18" width="1" height="2" fill="#777"/><rect x="902" y="10" width="1" height="2" fill="#7a7a7a"/><rect x="910" y="10" width="1" height="2" fill="#7a7a7a"/><rect x="917" y="10" width="1" height="2" fill="#7a7a7a"/><rect x="925" y="10" width="1" height="2" fill="#7a7a7a"/><rect x="932" y="9" width="1" height="4" fill="#7a7a7a"/><rect x="940" y="10" width="1" height="2" fill="#7a7a7a"/><path d="M305.9 20.5h6M308.9 17v3.5" stroke="#555" stroke-width="1"/><path d="M400.3 20.5h6M403.3 17v3.5" stroke="#555" stroke-width="1"/><path d="M494.8 20.5h6M497.8 17v3.5" stroke="#555" stroke-width="1"/><path d="M589.2 20.5h6M592.2 17v3.5" stroke="#555" stroke-width="1"/><path d="M683.6 20.5h6M686.6 17v3.5" stroke="#555" stroke-width="1"/><path d="M778.1 20.5h6M781.1 17v3.5" stroke="#555" stroke-width="1"/><path d="M872.5 20.5h6M875.5 17v3.5" stroke="#555" stroke-width="1"/><path d="M208.9 3.5h10l-4.5 8l4.5 8h-10l4.5-8z" fill="#e0e0e0" stroke="#666" stroke-width="1"/></svg>
<svg class="a" style="left:0;top:0" width="24" height="817"><rect x="4.5" y="277.5" width="15" height="151" fill="#f0f0f0" stroke="#9b9b9b"/><rect x="4" y="428.5" width="16" height="400" fill="#fff"/><rect x="10" y="285" width="2" height="1" fill="#7a7a7a"/><rect x="10" y="292" width="2" height="1" fill="#7a7a7a"/><rect x="10" y="300" width="2" height="1" fill="#7a7a7a"/><rect x="10" y="307" width="2" height="1" fill="#7a7a7a"/><rect x="9" y="315" width="4" height="1" fill="#7a7a7a"/><rect x="10" y="322" width="2" height="1" fill="#7a7a7a"/><rect x="10" y="330" width="2" height="1" fill="#7a7a7a"/><rect x="10" y="337" width="2" height="1" fill="#7a7a7a"/><rect x="10" y="345" width="2" height="1" fill="#7a7a7a"/><text x="0" y="0" font-size="9" text-anchor="middle" fill="#555" font-family="Liberation Sans" transform="translate(14.2 352.4) rotate(-90)">1</text><rect x="4" y="352" width="2" height="1" fill="#777"/><rect x="18" y="352" width="2" height="1" fill="#777"/><rect x="10" y="360" width="2" height="1" fill="#7a7a7a"/><rect x="10" y="368" width="2" height="1" fill="#7a7a7a"/><rect x="10" y="375" width="2" height="1" fill="#7a7a7a"/><rect x="10" y="383" width="2" height="1" fill="#7a7a7a"/><rect x="9" y="390" width="4" height="1" fill="#7a7a7a"/><rect x="10" y="398" width="2" height="1" fill="#7a7a7a"/><rect x="10" y="405" width="2" height="1" fill="#7a7a7a"/><rect x="10" y="413" width="2" height="1" fill="#7a7a7a"/><rect x="10" y="420" width="2" height="1" fill="#7a7a7a"/><rect x="10" y="435" width="2" height="1" fill="#7a7a7a"/><rect x="10" y="443" width="2" height="1" fill="#7a7a7a"/><rect x="10" y="451" width="2" height="1" fill="#7a7a7a"/><rect x="10" y="458" width="2" height="1" fill="#7a7a7a"/><rect x="9" y="466" width="4" height="1" fill="#7a7a7a"/><rect x="10" y="473" width="2" height="1" fill="#7a7a7a"/><rect x="10" y="481" width="2" height="1" fill="#7a7a7a"/><rect x="10" y="488" width="2" height="1" fill="#7a7a7a"/><rect x="10" y="496" width="2" height="1" fill="#7a7a7a"/><text x="0" y="0" font-size="9" text-anchor="middle" fill="#555" font-family="Liberation Sans" transform="translate(14.2 503.3) rotate(-90)">1</text><rect x="4" y="503" width="2" height="1" fill="#777"/><rect x="18" y="503" width="2" height="1" fill="#777"/><rect x="10" y="511" width="2" height="1" fill="#7a7a7a"/><rect x="10" y="518" width="2" height="1" fill="#7a7a7a"/><rect x="10" y="526" width="2" height="1" fill="#7a7a7a"/><rect x="10" y="534" width="2" height="1" fill="#7a7a7a"/><rect x="9" y="541" width="4" height="1" fill="#7a7a7a"/><rect x="10" y="549" width="2" height="1" fill="#7a7a7a"/><rect x="10" y="556" width="2" height="1" fill="#7a7a7a"/><rect x="10" y="564" width="2" height="1" fill="#7a7a7a"/><rect x="10" y="571" width="2" height="1" fill="#7a7a7a"/><text x="0" y="0" font-size="9" text-anchor="middle" fill="#555" font-family="Liberation Sans" transform="translate(14.2 578.8) rotate(-90)">2</text><rect x="4" y="579" width="2" height="1" fill="#777"/><rect x="18" y="579" width="2" height="1" fill="#777"/><rect x="10" y="586" width="2" height="1" fill="#7a7a7a"/><rect x="10" y="594" width="2" height="1" fill="#7a7a7a"/><rect x="10" y="601" width="2" height="1" fill="#7a7a7a"/><rect x="10" y="609" width="2" height="1" fill="#7a7a7a"/><rect x="9" y="617" width="4" height="1" fill="#7a7a7a"/><rect x="10" y="624" width="2" height="1" fill="#7a7a7a"/><rect x="10" y="632" width="2" height="1" fill="#7a7a7a"/><rect x="10" y="639" width="2" height="1" fill="#7a7a7a"/><rect x="10" y="647" width="2" height="1" fill="#7a7a7a"/><text x="0" y="0" font-size="9" text-anchor="middle" fill="#555" font-family="Liberation Sans" transform="translate(14.2 654.2) rotate(-90)">3</text><rect x="4" y="654" width="2" height="1" fill="#777"/><rect x="18" y="654" width="2" height="1" fill="#777"/><rect x="10" y="662" width="2" height="1" fill="#7a7a7a"/><rect x="10" y="669" width="2" height="1" fill="#7a7a7a"/><rect x="10" y="677" width="2" height="1" fill="#7a7a7a"/><rect x="10" y="684" width="2" height="1" fill="#7a7a7a"/><rect x="9" y="692" width="4" height="1" fill="#7a7a7a"/><rect x="10" y="700" width="2" height="1" fill="#7a7a7a"/><rect x="10" y="707" width="2" height="1" fill="#7a7a7a"/><rect x="10" y="715" width="2" height="1" fill="#7a7a7a"/><rect x="10" y="722" width="2" height="1" fill="#7a7a7a"/><text x="0" y="0" font-size="9" text-anchor="middle" fill="#555" font-family="Liberation Sans" transform="translate(14.2 729.7) rotate(-90)">4</text><rect x="4" y="730" width="2" height="1" fill="#777"/><rect x="18" y="730" width="2" height="1" fill="#777"/><rect x="10" y="737" width="2" height="1" fill="#7a7a7a"/><rect x="10" y="745" width="2" height="1" fill="#7a7a7a"/><rect x="10" y="752" width="2" height="1" fill="#7a7a7a"/><rect x="10" y="760" width="2" height="1" fill="#7a7a7a"/><rect x="9" y="767" width="4" height="1" fill="#7a7a7a"/><rect x="10" y="775" width="2" height="1" fill="#7a7a7a"/><rect x="10" y="783" width="2" height="1" fill="#7a7a7a"/><rect x="10" y="790" width="2" height="1" fill="#7a7a7a"/><rect x="10" y="798" width="2" height="1" fill="#7a7a7a"/><text x="0" y="0" font-size="9" text-anchor="middle" fill="#555" font-family="Liberation Sans" transform="translate(14.2 805.1) rotate(-90)">5</text><rect x="4" y="805" width="2" height="1" fill="#777"/><rect x="18" y="805" width="2" height="1" fill="#777"/><rect x="10" y="813" width="2" height="1" fill="#7a7a7a"/></svg>
<div class="a" style="left:61px;top:275px;width:900px;height:600px;background:#fff;border-left:1px solid #b4b4b4;border-top:1px solid #b8b8b8;box-shadow:-3px -1px 6px rgba(0,0,0,0.12)"></div>
<div class="a" style="left:214px;top:428px;width:740px;height:1px;background:#c4c4c4"></div><div class="a" style="left:214px;top:628.5px;width:740px;height:1px;background:#c4c4c4"></div><div class="a" style="left:214px;top:428px;width:1px;height:400px;background:#c4c4c4"></div>
<div class="doc" style="left:223.3px;top:445.12px">TEST</div><div class="a" style="left:290px;top:458px;width:2px;height:2px;background:#2a80d6"></div><svg class="a" style="left:294px;top:450px" width="13" height="25" viewBox="0 0 13 25"><path d="M7 0H4C1.6 0 0 2.2 0 5S1.6 10 4 10H7Z" fill="#2a80d6"/><rect x="3" y="0" width="9" height="1.2" fill="#2a80d6"/><rect x="6" y="0" width="1.1" height="24" fill="#2a80d6"/><rect x="9" y="0" width="1.7" height="24" fill="#2a80d6"/></svg><div class="doc" style="left:223.3px;top:474.62px">TEST</div><div class="a" style="left:290px;top:488px;width:2px;height:2px;background:#2a80d6"></div><svg class="a" style="left:294px;top:480px" width="13" height="25" viewBox="0 0 13 25"><path d="M7 0H4C1.6 0 0 2.2 0 5S1.6 10 4 10H7Z" fill="#2a80d6"/><rect x="3" y="0" width="9" height="1.2" fill="#2a80d6"/><rect x="6" y="0" width="1.1" height="24" fill="#2a80d6"/><rect x="9" y="0" width="1.7" height="24" fill="#2a80d6"/></svg><div class="doc" style="left:223.3px;top:504.12px">TEST</div><div class="a" style="left:290px;top:517px;width:2px;height:2px;background:#2a80d6"></div><svg class="a" style="left:294px;top:509px" width="13" height="25" viewBox="0 0 13 25"><path d="M7 0H4C1.6 0 0 2.2 0 5S1.6 10 4 10H7Z" fill="#2a80d6"/><rect x="3" y="0" width="9" height="1.2" fill="#2a80d6"/><rect x="6" y="0" width="1.1" height="24" fill="#2a80d6"/><rect x="9" y="0" width="1.7" height="24" fill="#2a80d6"/></svg><svg class="a" style="left:224px;top:538px" width="13" height="25" viewBox="0 0 13 25"><path d="M7 0H4C1.6 0 0 2.2 0 5S1.6 10 4 10H7Z" fill="#2a80d6"/><rect x="3" y="0" width="9" height="1.2" fill="#2a80d6"/><rect x="6" y="0" width="1.1" height="24" fill="#2a80d6"/><rect x="9" y="0" width="1.7" height="24" fill="#2a80d6"/></svg><div class="doc" style="left:223.3px;top:563.12px">TEST</div><div class="a" style="left:290px;top:576px;width:2px;height:2px;background:#2a80d6"></div><svg class="a" style="left:294px;top:568px" width="13" height="25" viewBox="0 0 13 25"><path d="M7 0H4C1.6 0 0 2.2 0 5S1.6 10 4 10H7Z" fill="#2a80d6"/><rect x="3" y="0" width="9" height="1.2" fill="#2a80d6"/><rect x="6" y="0" width="1.1" height="24" fill="#2a80d6"/><rect x="9" y="0" width="1.7" height="24" fill="#2a80d6"/></svg><div class="doc" style="left:223.3px;top:592.62px">TEST</div><div class="a" style="left:290px;top:606px;width:2px;height:2px;background:#2a80d6"></div><div class="a" style="left:296.6px;top:606px;width:2px;height:2px;background:#2a80d6"></div><div class="a" style="left:303.4px;top:606px;width:2px;height:2px;background:#2a80d6"></div><div class="doc" style="left:307.2px;top:592.62px">test</div><div class="a" style="left:347px;top:606px;width:2px;height:2px;background:#2a80d6"></div><div class="doc" style="left:351px;top:592.62px;color:#f00;font-weight:bold">test</div><div class="a" style="left:394px;top:606px;width:2px;height:2px;background:#2a80d6"></div><svg class="a" style="left:397px;top:598px" width="13" height="25" viewBox="0 0 13 25"><path d="M7 0H4C1.6 0 0 2.2 0 5S1.6 10 4 10H7Z" fill="#2a80d6"/><rect x="3" y="0" width="9" height="1.2" fill="#2a80d6"/><rect x="6" y="0" width="1.1" height="24" fill="#2a80d6"/><rect x="9" y="0" width="1.7" height="24" fill="#2a80d6"/></svg>
<svg class="a" style="left:0;top:0" width="946" height="817"><polyline points="306.20,618.95 308.00,617.60 310.00,617.60 312.00,619.10 314.00,619.10 316.00,617.60 318.00,617.60 320.00,619.10 322.00,619.10 324.00,617.60 326.00,617.60 328.00,619.10 330.00,619.10 332.00,617.60 334.00,617.60 336.00,619.10 338.00,619.10 340.00,617.60 342.00,617.60 343.20,618.50" fill="none" stroke="#ff0000" stroke-width="1.1"/><polyline points="350.20,619.10 350.30,619.10 352.30,617.60 354.30,617.60 356.30,619.10 358.30,619.10 360.30,617.60 362.30,617.60 364.30,619.10 366.30,619.10 368.30,617.60 370.30,617.60 372.30,619.10 374.30,619.10 376.30,617.60 378.30,617.60 380.30,619.10 382.30,619.10 384.30,617.60 386.30,617.60 388.30,619.10 390.00,619.10" fill="none" stroke="#ff0000" stroke-width="1.1"/></svg>
</body></html>
